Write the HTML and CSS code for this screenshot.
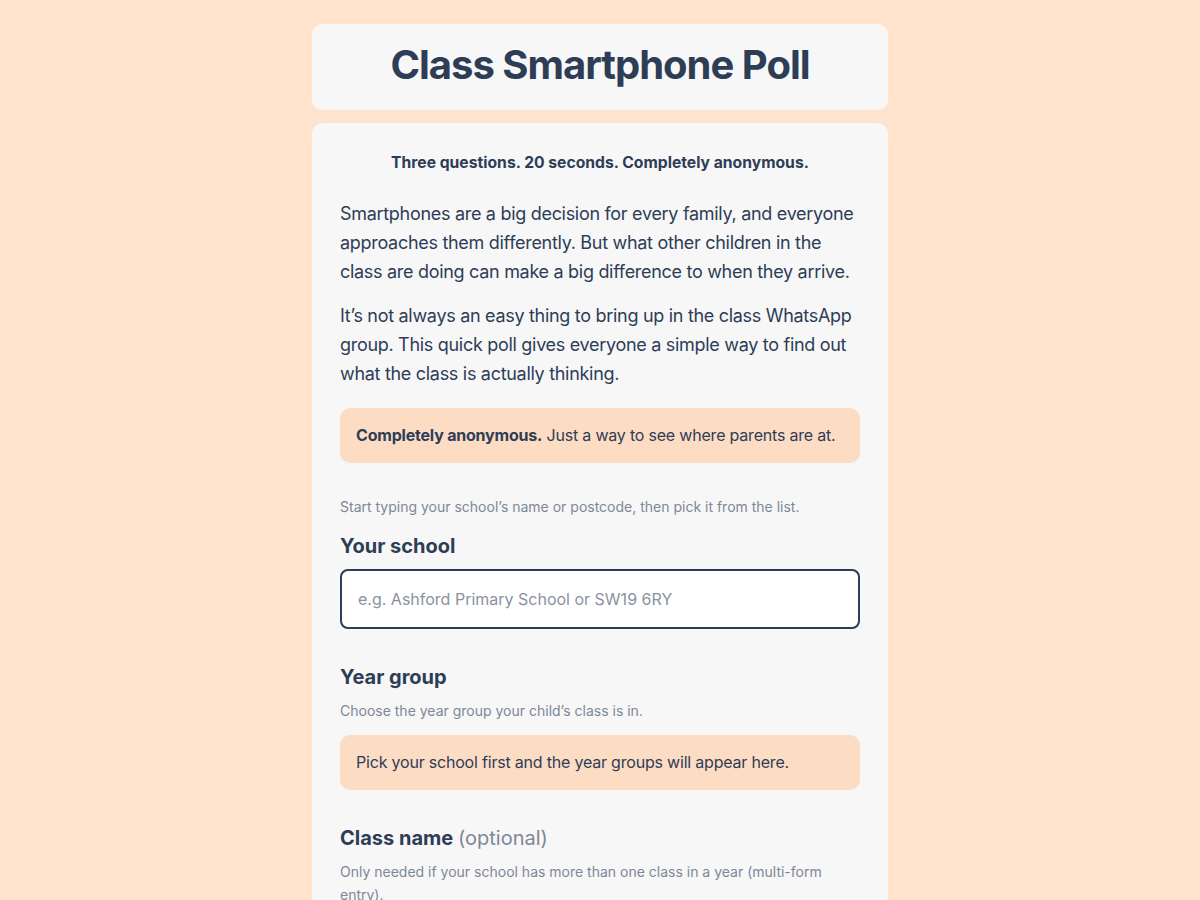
FILE: index.html
```html
<!DOCTYPE html>
<html lang="en">
<head>
<meta charset="utf-8">
<title>Class Smartphone Poll</title>
<link rel="stylesheet" href="styles.css">
</head>
<body>
<main class="wrap">
  <header class="card head">
    <h1 class="title">Class Smartphone Poll</h1>
  </header>
  <section class="card body">
    <p class="tagline">Three questions. 20 seconds. Completely anonymous.</p>
    <p class="lead">Smartphones are a big decision for every family, and everyone approaches them differently. But what other children in the class are doing can make a big difference to when they arrive.</p>
    <p class="lead">It’s not always an easy thing to bring up in the class WhatsApp group. This quick poll gives everyone a simple way to find out what the class is actually thinking.</p>
    <div class="callout"><strong>Completely anonymous.</strong> Just a way to see where parents are at.</div>

    <p class="hint first">Start typing your school’s name or postcode, then pick it from the list.</p>
    <label class="label" for="school">Your school</label>
    <input class="input" id="school" type="text" placeholder="e.g. Ashford Primary School or SW19 6RY">

    <h2 class="label section">Year group</h2>
    <p class="hint">Choose the year group your child’s class is in.</p>
    <div class="callout">Pick your school first and the year groups will appear here.</div>

    <h2 class="label section">Class name <span class="opt">(optional)</span></h2>
    <p class="hint">Only needed if your school has more than one class in a year (multi-form entry).</p>
  </section>
</main>
</body>
</html>
```
FILE: styles.css
```css
* { box-sizing: border-box; }
html, body { margin: 0; padding: 0; }
body {
  background: #ffe3cc;
  font-family: Inter, "Liberation Sans", sans-serif;
  color: #2e3d56;
}
.wrap {
  width: 576px;
  margin: 24px auto 0;
  display: flex;
  flex-direction: column;
  gap: 13px;
}
.card {
  background: #f7f7f8;
  border-radius: 10px;
}
.head {
  height: 86px;
  padding-bottom: 5px;
  display: flex;
  align-items: center;
  justify-content: center;
}
.title {
  margin: 0;
  font-size: 40px;
  font-weight: 700;
  letter-spacing: -1px;
  color: #2e3d56;
}
.body {
  padding: 28px 28px 40px;
}
.tagline {
  margin: 0 0 25px;
  text-align: center;
  font-size: 15.7px;
  font-weight: 700;
  line-height: 24px;
}
.lead {
  margin: 0 0 16px;
  font-size: 18px;
  line-height: 28.8px;
  letter-spacing: -0.3px;
}
.callout {
  background: #fddcc4;
  border-radius: 10px;
  padding: 16px;
  font-size: 16px;
  line-height: 23px;
  letter-spacing: -0.2px;
  margin-top: 19px;
}
.callout strong { font-weight: 700; }
.hint {
  margin: 0;
  font-size: 14px;
  line-height: 23px;
  color: #7e8797;
}
.hint.first { margin-top: 32px; }
.label {
  display: block;
  margin: 14px 0 9px;
  font-size: 20px;
  font-weight: 700;
  line-height: 28px;
}
.section { margin: 34px 0 8px; }
.section + .hint + .callout { margin-top: 13px; }
.opt { font-weight: 400; color: #7e8797; }
.input {
  display: block;
  width: 100%;
  height: 60px;
  border: 2px solid #2e3d56;
  border-radius: 8px;
  background: #fff;
  padding: 0 16px;
  font-family: inherit;
  font-size: 16px;
  color: #2e3d56;
}
.input::placeholder { color: #8a92a0; }
```
